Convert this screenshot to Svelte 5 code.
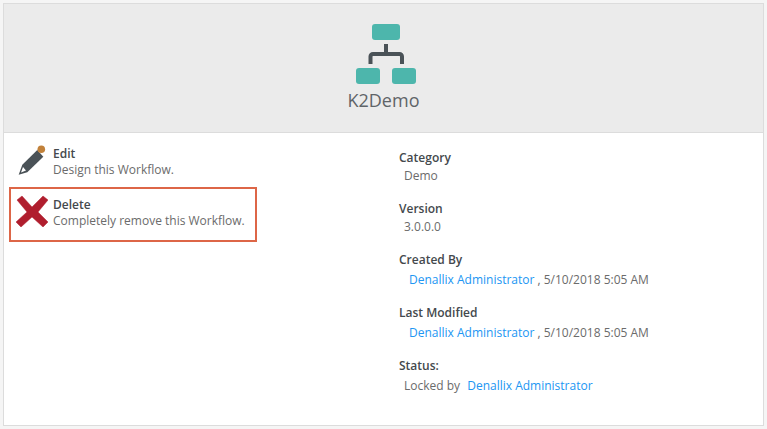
<script>
  const actions = [
    { id: "edit", title: "Edit", text: "Design this Workflow." },
    { id: "delete", title: "Delete", text: "Completely remove this Workflow." }
  ];
  const stamp = "5/10/2018 5:05 AM";
  const user = "Denallix Administrator";
</script>

<div class="page">
  <div class="panel">
    <header class="head">
      <svg class="logo" width="60" height="60" viewBox="0 0 60 60">
        <rect x="16" y="0" width="28" height="16" rx="3" fill="#4db6ac" />
        <path d="M30 20v10M14.500 40v-7.500a2.500 2.500 0 0 1 2.500-2.500h26.500a2.500 2.500 0 0 1 2.500 2.500v7.500" fill="none" stroke="#4a5257" stroke-width="4" />
        <rect x="0" y="44" width="24" height="16" rx="3" fill="#4db6ac" />
        <rect x="36" y="44" width="24" height="16" rx="3" fill="#4db6ac" />
      </svg>
      <h1>K2Demo</h1>
    </header>

    <div class="body">
      <div class="actions">
        {#each actions as a}
          <div class="action" class:selected={a.id === "delete"}>
            <span class="icon">
              {#if a.id === "edit"}
                <svg width="32" height="32" viewBox="0 0 32 32">
                  <path d="M2.700 29.700L6.300 19.700 21.300 5 27.300 11.700 11.300 27.300z" fill="#4a5257" />
                  <path d="M5 27.500L7 22 10 25.500z" fill="#fff" />
                  <circle cx="25.300" cy="4.200" r="3.800" fill="#c1813a" />
                </svg>
              {:else}
                <svg width="32" height="32" viewBox="0 0 32 32">
                  <path d="M1 5L6 1 16 12 27 1 32 5 22 17 32 27 27 32 16 22 5 32 0 27 11 17z" fill="#b01e2e" stroke="#b01e2e" stroke-width="0.500" stroke-linejoin="round" />
                </svg>
              {/if}
            </span>
            <div class="copy">
              <strong>{a.title}</strong>
              <span>{a.text}</span>
            </div>
          </div>
        {/each}
      </div>

      <dl class="details">
        <div class="item">
          <dt>Category</dt>
          <dd class="plain">Demo</dd>
        </div>
        <div class="item">
          <dt>Version</dt>
          <dd class="plain">3.0.0.0</dd>
        </div>
        <div class="item tall">
          <dt>Created By</dt>
          <dd><a href="#created">{user}</a> , {stamp}</dd>
        </div>
        <div class="item tall">
          <dt>Last Modified</dt>
          <dd><a href="#modified">{user}</a> , {stamp}</dd>
        </div>
        <div class="item tall">
          <dt>Status:</dt>
          <dd class="plain">Locked by <a class="locked" href="#locked">{user}</a></dd>
        </div>
      </dl>
    </div>
  </div>
</div>

<style>
  :global(body) {
    background: #f5f5f5;
  }
  .page {
    padding: 3px;
    height: 429px;
    box-sizing: border-box;
    font-family: "Open Sans", sans-serif;
    font-size: 12px;
    color: #6b6b6b;
  }
  .panel {
    height: 423px;
    box-sizing: border-box;
    background: #fff;
    border: 1px solid #dcdcdc;
  }
  .head {
    height: 129px;
    box-sizing: border-box;
    background: #ebebeb;
    border-bottom: 1px solid #dcdcdc;
    display: flex;
    flex-direction: column;
    align-items: center;
    padding-top: 20px;
  }
  .logo {
    display: block;
    margin-left: 5px;
  }
  h1 {
    margin: 4px 0 0;
    font-size: 18px;
    line-height: 24px;
    font-weight: 400;
    color: #5f6468;
  }
  .body {
    display: flex;
  }
  .actions {
    width: 395px;
    padding: 4px 0 0 5px;
    box-sizing: border-box;
  }
  .action {
    width: 248px;
    height: 50px;
    box-sizing: border-box;
    display: flex;
    align-items: flex-start;
    border: 2px solid transparent;
    line-height: 16px;
  }
  .action.selected {
    height: 55px;
    border-color: #dd6647;
  }
  .action.selected .copy {
    margin-top: 8px;
  }
  .icon {
    width: 42px;
    flex: none;
    padding: 6px 0 0 5px;
    box-sizing: border-box;
  }
  .icon svg {
    display: block;
  }
  .copy {
    display: flex;
    flex-direction: column;
    margin-top: 7px;
  }
  .copy strong {
    font-weight: 600;
    color: #44494d;
  }
  .details {
    margin: 16px 0 0;
  }
  .item {
    line-height: 18px;
    margin-bottom: 15px;
  }
  .item.tall dd {
    line-height: 22px;
  }
  .item.tall {
    margin-bottom: 13px;
  }
  dt {
    font-weight: 600;
    color: #44494d;
  }
  dd {
    margin: 0 0 0 10px;
  }
  dd.plain {
    margin-left: 5px;
  }
  a {
    color: #2196f3;
    text-decoration: none;
  }
  .locked {
    margin-left: 4px;
  }
</style>
